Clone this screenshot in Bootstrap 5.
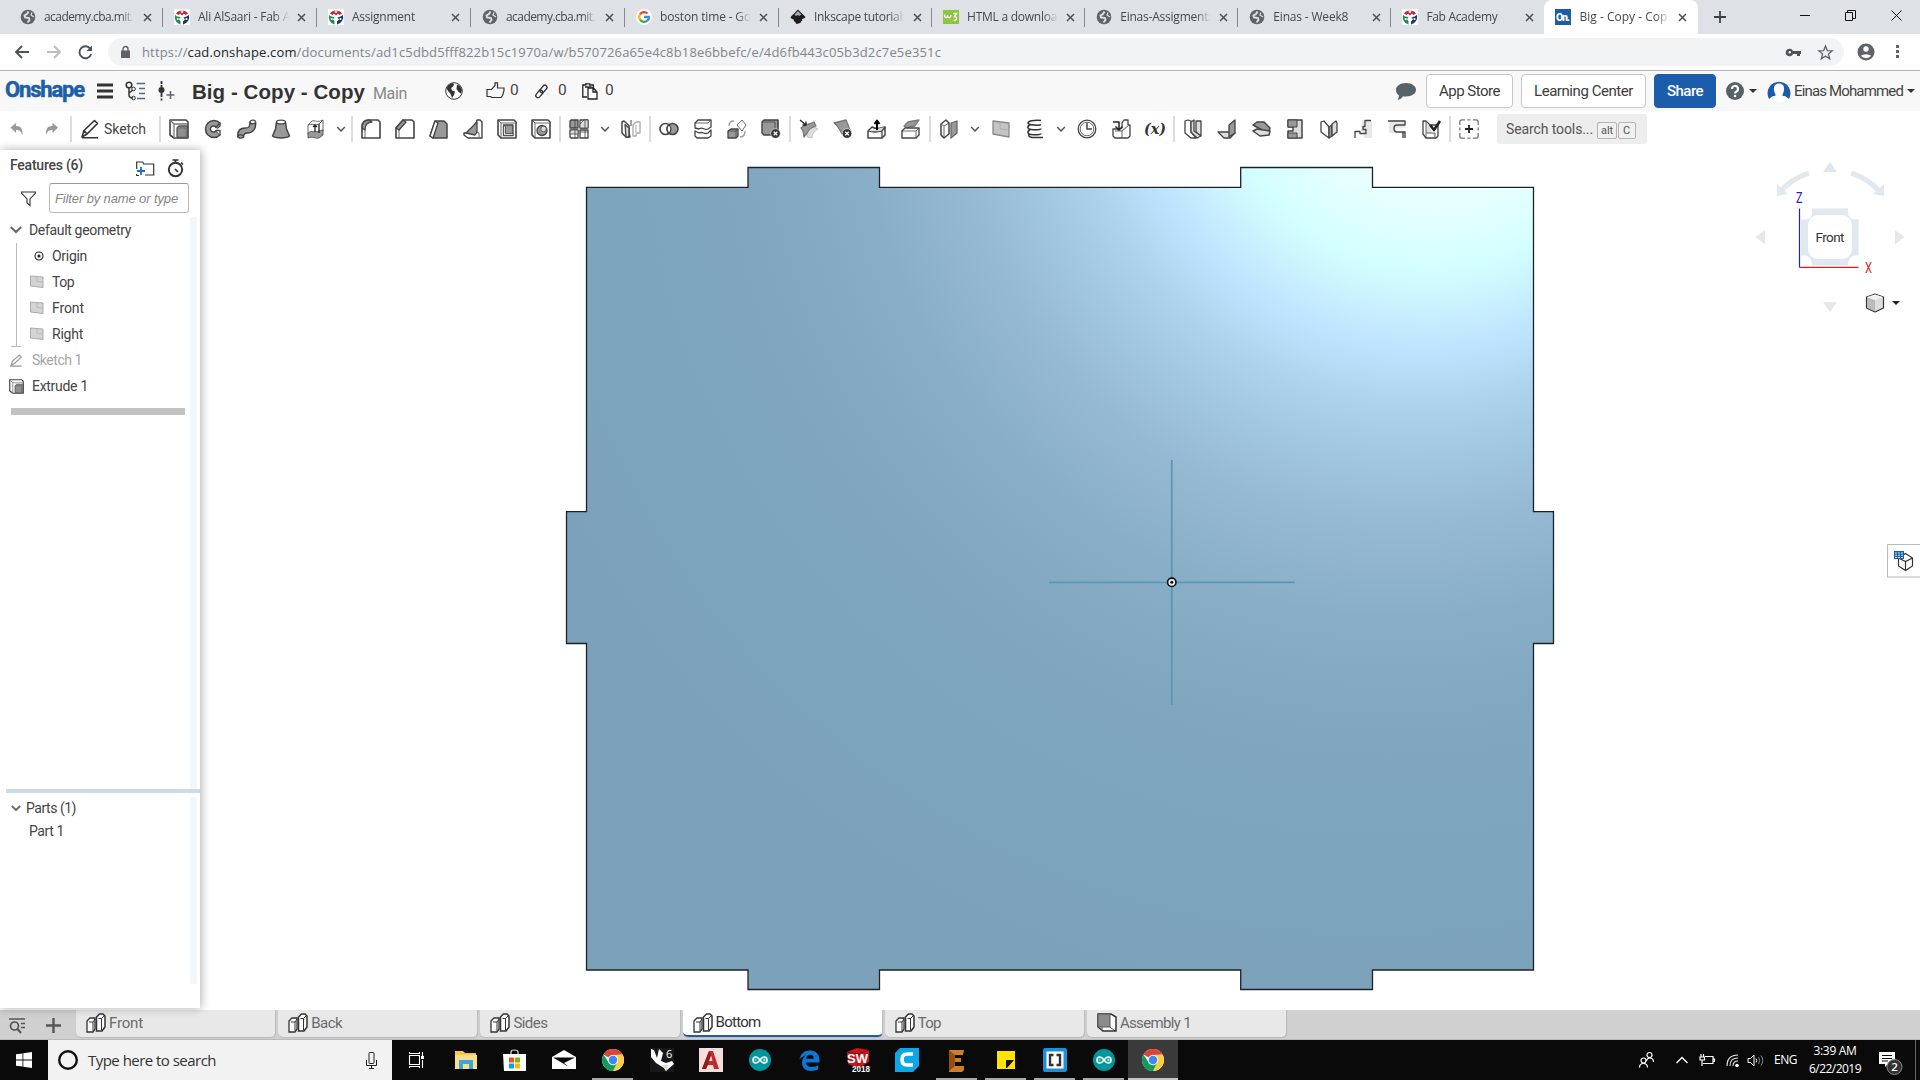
<!DOCTYPE html>
<html lang="en">
<head>
<meta charset="utf-8">
<title>Big - Copy - Copy</title>
<link href="https://cdn.jsdelivr.net/npm/bootstrap@5.3.0/dist/css/bootstrap.min.css" rel="stylesheet">
<style>
body{width:1920px;height:1080px;overflow:hidden;background:#fff;color:#444;font-family:Roboto,"Liberation Sans",sans-serif;font-size:14px;line-height:1}
svg{display:block;flex:none;overflow:visible}
[data-w]{display:inline-block;white-space:nowrap;flex:none}
.seg{font-family:"Open Sans","Noto Sans",sans-serif}
.tabstrip{height:34px;background:#dee1e6;padding-left:9px}
.btab{width:153.1px;flex:none;padding-left:11px;position:relative;font-size:12px;color:#45494d}
.btab:nth-child(-n+5){width:154px}
.btab::after{content:"";position:absolute;right:0;top:8px;width:1px;height:19px;background:#85888c}
.btab.noline::after{display:none}
.btab .ttl{width:92px;margin-left:8px;overflow:hidden;line-height:18px;white-space:nowrap;-webkit-mask-image:linear-gradient(90deg,#000 76px,transparent 91px)}
.btab .cls{margin-left:7px}
.btab.on{background:#fff;border-radius:8px 8px 0 0}
.winbtns{margin-left:auto;padding-right:18px;gap:35px}
.omni{height:36px;padding:4px 0 0 0}
.urlbox{width:1736px;height:28px;border-radius:14px;background:#f1f3f4;margin-left:14px;color:#80868b;font-size:13px}
.appbar{height:41px;background:#f8f8f8;border-top:1px solid #b4b2b6}
.brandtxt{font:bold 22px Roboto,sans-serif;color:#1b5faa;-webkit-text-stroke:.5px #1b5faa}
.title{font:bold 20.5px "Liberation Sans",sans-serif;color:#333}
.cnt{font-size:15.5px;color:#444}
.hbtn{height:34px;border:1px solid #c8c8c8;border-radius:4px;background:#fff;color:#3c3c3c;font-size:15px;padding:0}
.hbtn.share{background:#1b5dab;border-color:#1b5dab;color:#fff;font-weight:500}
.caret{width:0;height:0;border:4px solid transparent;border-top:4px solid #333;border-bottom:0}
.tools{height:39px;padding-bottom:3px}
.tools svg{width:20px;height:20px;margin:0 7px}
.tools svg.chev{width:10px;margin:0 4px}
.vsep{width:2px;height:26px;background:#ddd;margin:0 1px;flex:none}
.ic{fill:none;stroke:#444;stroke-width:1.3;stroke-linejoin:round}
.g{fill:#999}.w{fill:#fff}.lt{fill:#ddd}.k{fill:#333;stroke:none}.th{stroke-width:.8}
.search{width:150px;height:30px;background:#ededed;border-radius:3px;margin-left:11px;padding-left:9px;font-size:14px;color:#555}
.keycap{border:1px solid #b5b5b5;border-radius:2px;height:17px;font-size:11px;line-height:15px;padding:0 3px;margin-top:3px;background:#f0f0f0}
.side{width:200px;height:858px;background:#fff;box-shadow:1px 0 9px rgba(0,0,0,.33);z-index:2;flex:none}
.feath{height:33px;padding:0 16px 0 10px}
.finput{width:140px;height:30px;border:1px solid #bbb;border-top:1px solid #999;border-radius:3px;font:italic 13px "Liberation Sans",sans-serif;color:#858585;padding-left:5px}
.tree{height:572px;border-right:7px solid #f2f7fb;width:197px}
.trow{height:26px;font-size:14px}
.kids{margin-left:16px;border-left:1px solid #bbb;position:relative;height:104px;padding-left:13px}
.kids::after{content:"";position:absolute;left:-6px;bottom:0;width:10px;height:1px;background:#bbb}
.rollbar{width:174px;height:7px;background:#c2c2c2;margin:9px 0 0 11px}
.split{height:4px;margin-left:6px;background:#cfdbe4}
.plist{height:187px;width:197px;margin-top:4px;border-right:7px solid #f2f7fb}
.dtabs{height:30px;background:#d0d0d0;border-bottom:1px solid #bbb;gap:2px}
.dtab{width:200.2px;height:27px;background:#e8e8e8;border-radius:0 0 5px 5px;border-right:1px solid #bcbcbc;padding-left:10px;font-size:15px;color:#6b6b6b;box-shadow:0 1px 1px #bbb;padding-bottom:1px}
.dtab.on{background:#fff;border-bottom:2.5px solid #1b5dab;color:#333;padding-bottom:0}
.task{height:40px;background:#0a0a0a;color:#fff}
.tsearch{width:344px;height:40px;background:#f2f2f2;color:#333;padding-left:10px;font-size:15px}
.slot{width:49.1px;height:40px;flex:none}
.slot.run{box-shadow:inset 0 -2px #a9a9a9;width:41.1px;margin:0 4px}
.slot.on{background:#3a3a3a;box-shadow:inset 0 -2px #c5c5c5}
.clock{width:60px;font-size:12px;line-height:18px}
</style>
<script src="https://cdn.jsdelivr.net/npm/bootstrap@5.3.0/dist/js/bootstrap.bundle.min.js"></script>
</head>
<body class="d-flex flex-column">
<svg width="0" height="0" class="position-absolute">
<defs>
<symbol id="globe" viewBox="0 0 16 16"><circle cx="8" cy="8" r="7.300" fill="#5f6368"/><path d="M8.500 2.500L7 5 4.500 6.500 5 8.500l4 .5.500 2-2 2.500" fill="none" stroke="#dee1e6" stroke-width="1.900"/><path d="M12 3.500l-1 2.500 3 2" fill="none" stroke="#dee1e6" stroke-width="1.200"/></symbol>
<symbol id="fab" viewBox="0 0 16 16"><path fill="#fff" d="M0 0h16v16H0z"/><path d="M2 4.500A7.500 7.500 0 0 1 14 4.500L11.500 6 10 4.500 8 6.500 6 4.500 4.500 6z" fill="#cf2027"/><path d="M1.200 6A7.500 7.500 0 0 0 6.500 15.500V12L5 10.500 6.500 8 3 7.500z" fill="#1e8a55"/><path d="M14.800 6A7.500 7.500 0 0 1 9 15.500V12.500L11 10.500 9.500 8.500 12.500 7.500z" fill="#173a66"/><circle cx="8" cy="2.800" r="1.300" fill="#fff"/><circle cx="3.700" cy="10" r="1.100" fill="#fff"/><circle cx="12.500" cy="10" r="1.100" fill="#fff"/></symbol>
<symbol id="x" viewBox="0 0 9 9"><path d="M1 1l7 7M8 1l-7 7" stroke="#4c5054" stroke-width="1.500"/></symbol>
<symbol id="chev" viewBox="0 0 10 20"><path d="M1.200 8l3.800 4 3.800-4" fill="none" stroke="#555" stroke-width="1.500"/></symbol>
<symbol id="studio" viewBox="0 0 20 20"><path d="M1 8l3-3h5v11l-2 3H1z" fill="#fff" stroke="#333" stroke-width="1.300"/><path d="M3 9h4v9M7 9l2-3" fill="none" stroke="#333" stroke-width="1"/><path d="M10.500 4l3-3H17l2 2v11l-3 4h-5.500z" fill="#fff" stroke="#333" stroke-width="1.500"/><path d="M12.500 5.500h3V17M15.500 5.500l3-3" fill="none" stroke="#333" stroke-width="1"/></symbol>
<symbol id="plane" viewBox="0 0 14 14"><path d="M.5 1l12.500 1v10.500L.5 11z" fill="#d4d4d4" stroke="#aaa"/><path d="M7 2v4.500l6 .5" fill="none" stroke="#bbb"/></symbol>
<symbol id="extr" viewBox="0 0 20 20"><path d="M1 1h16l2 2v16H5L1 16z" fill="#fff" stroke="#444" stroke-width="1.600"/><path d="M5 19V5L1 1M5 5h13" fill="none" stroke="#777"/><path d="M8 9l2-2h8.500v11.500H8z" fill="#8f8f8f" stroke="#555"/><path d="M8 9h9v9" fill="none" stroke="#666" stroke-width=".8"/></symbol>
<symbol id="chrome" viewBox="0 0 24 24"><circle cx="12" cy="12" r="11" fill="#fff"/><path d="M12 12L2.470 6.500A11 11 0 0 1 21.530 6.500L12 7z" fill="#db4437"/><path d="M12 7h9.800A11 11 0 0 1 12 23l4.300-8.500z" fill="#ffcd40"/><path d="M2.470 6.500A11 11 0 0 0 12 23l4.300-8.500-8.600 0z" fill="#0f9d58"/><circle cx="12" cy="12" r="5.200" fill="#f1f1f1"/><circle cx="12" cy="12" r="4.200" fill="#4285f4"/></symbol>
<symbol id="ardu" viewBox="0 0 24 24"><circle cx="12" cy="12" r="11" fill="#00979c"/><path d="M12 12c-1.500-2-2.500-3-4-3a3 3 0 0 0 0 6c1.500 0 2.500-1 4-3s2.500-3 4-3a3 3 0 0 1 0 6c-1.500 0-2.500-1-4-3z" fill="none" stroke="#fff" stroke-width="1.600"/><path d="M6.500 12h2.500M15 12h2.500M16.250 10.800v2.400" stroke="#fff" stroke-width=".8"/></symbol>
</defs>
</svg>

<!-- browser tabs -->
<div class="tabstrip d-flex seg">
<div class="btab d-flex align-items-center"><svg width="16" height="16"><use href="#globe"/></svg><div class="ttl"><span data-w="89">academy.cba.mit.</span></div><svg class="cls" width="9" height="9"><use href="#x"/></svg></div>
<div class="btab d-flex align-items-center"><svg width="16" height="16"><use href="#fab"/></svg><div class="ttl"><span data-w="92">Ali AlSaari - Fab A</span></div><svg class="cls" width="9" height="9"><use href="#x"/></svg></div>
<div class="btab d-flex align-items-center"><svg width="16" height="16"><use href="#fab"/></svg><div class="ttl"><span data-w="63">Assignment</span></div><svg class="cls" width="9" height="9"><use href="#x"/></svg></div>
<div class="btab d-flex align-items-center"><svg width="16" height="16"><use href="#globe"/></svg><div class="ttl"><span data-w="89">academy.cba.mit.</span></div><svg class="cls" width="9" height="9"><use href="#x"/></svg></div>
<div class="btab d-flex align-items-center"><svg width="16" height="16" viewBox="0 0 16 16"><circle cx="8" cy="8" r="8" fill="#fff"/><g fill="none" stroke-width="2.300"><path d="M4 5.300A5 5 0 0 1 11.500 4.500" stroke="#ea4335"/><path d="M4 5.300a5 5 0 0 0 0 5.400" stroke="#fbbc05"/><path d="M4 10.700a5 5 0 0 0 7.300 1" stroke="#34a853"/><path d="M11.300 11.700A4.500 4.500 0 0 0 13 8H8" stroke="#4285f4"/></g></svg><div class="ttl"><span data-w="91">boston time - Go</span></div><svg class="cls" width="9" height="9"><use href="#x"/></svg></div>
<div class="btab d-flex align-items-center"><svg width="16" height="16" viewBox="0 0 16 16"><path d="M8 .5l7 7c1 1.500-1 2-2.500 2.300s1 1.400-1 2.200c-1 .4 0 1.500-1.500 2s-3 1.500-4 .5 0-1.500-1.500-2 0-1.500-1-2S-.2 9.500 1 7.500z" fill="#1c1c1c"/><path d="M8 2l3.500 3.500-2 1.500-1.500-1-2 1-1.500-1.500z" fill="#aaa"/></svg><div class="ttl"><span data-w="91">Inkscape tutorial:</span></div><svg class="cls" width="9" height="9"><use href="#x"/></svg></div>
<div class="btab d-flex align-items-center"><svg width="16" height="16" viewBox="0 0 16 16"><path d="M0 1h16v14H0z" fill="#8bc63f"/><path d="M1.500 5.500c0 4 3 4 3 .5 0 3.500 3 3.500 3.500 0M10 4.500h3.500L11.500 7.500c3 0 3 4-1 4" fill="none" stroke="#fff" stroke-width="1.400"/></svg><div class="ttl"><span data-w="90">HTML a downloa</span></div><svg class="cls" width="9" height="9"><use href="#x"/></svg></div>
<div class="btab d-flex align-items-center"><svg width="16" height="16"><use href="#globe"/></svg><div class="ttl"><span data-w="91">Einas-Assigment:</span></div><svg class="cls" width="9" height="9"><use href="#x"/></svg></div>
<div class="btab d-flex align-items-center"><svg width="16" height="16"><use href="#globe"/></svg><div class="ttl"><span data-w="75">Einas - Week8</span></div><svg class="cls" width="9" height="9"><use href="#x"/></svg></div>
<div class="btab noline d-flex align-items-center"><svg width="16" height="16"><use href="#fab"/></svg><div class="ttl"><span data-w="71">Fab Academy</span></div><svg class="cls" width="9" height="9"><use href="#x"/></svg></div>
<div class="btab on noline d-flex align-items-center"><svg width="16" height="16" viewBox="0 0 16 16"><path d="M0 0h16v16H0z" fill="#1b5dab"/><text x="1" y="12" font-family="Roboto" font-weight="900" font-size="10.500" fill="#fff" textLength="14">On.</text></svg><div class="ttl"><span data-w="88">Big - Copy - Cop</span></div><svg class="cls" width="9" height="9"><use href="#x"/></svg></div>
<svg class="mt-2 ms-3" width="12" height="17" viewBox="0 0 12 17"><path d="M6 3v12M0 9h12" stroke="#3c4043" stroke-width="1.800"/></svg>
<div class="winbtns d-flex align-items-center pb-1"><svg width="10" height="11"><path d="M0 5.500h10" stroke="#111"/></svg><svg width="11" height="11" viewBox="0 0 11 11"><path d="M.5 2.500h7v8h-7zM2.500 2.500v-2h8v8h-3" fill="none" stroke="#111"/></svg><svg width="11" height="11" viewBox="0 0 11 11"><path d="M.5.5l10 10M10.500.5l-10 10" stroke="#111"/></svg></div>
</div>

<!-- address bar -->
<div class="omni d-flex align-items-start bg-white">
<div class="d-flex align-items-center h-100 pb-1">
<svg style="margin-left:15px" width="14" height="14" viewBox="0 0 14 14"><path d="M14 7H1.500M7 1L1 7l6 6" fill="none" stroke="#4f5357" stroke-width="1.900"/></svg>
<svg style="margin-left:18px" width="14" height="14" viewBox="0 0 14 14"><path d="M0 7h12.500M7 1l6 6-6 6" fill="none" stroke="#bbbdbf" stroke-width="1.900"/></svg>
<svg style="margin-left:17px" width="15" height="15" viewBox="0 0 15 15"><path d="M12.500 4A6 6 0 1 0 13.200 9" fill="none" stroke="#4f5357" stroke-width="1.900"/><path d="M14 .5V6H8.500z" fill="#4f5357"/></svg>
</div>
<div class="urlbox seg d-flex align-items-center" style="margin-left:15px">
<svg style="margin-left:13px" width="9" height="12" viewBox="0 0 9 12"><path d="M0 4.500h9V12H0z" fill="#5f6368"/><path d="M2 5V3a2.500 2.500 0 0 1 5 0v2" fill="none" stroke="#5f6368" stroke-width="1.400"/></svg>
<span style="margin-left:12px" data-w="799">https://<span class="text-dark">cad.onshape.com</span>/documents/ad1c5dbd5fff822b15c1970a/w/b570726a65e4c8b18e6bbefc/e/4d6fb443c05b3d2c7e5e351c</span>
<svg class="ms-auto" width="15" height="9" viewBox="0 0 15 9"><path d="M6 3h9v3h-1v2h-3V6H7a3.800 3.800 0 1 1 0-3z" fill="#4f5357"/><circle cx="3.800" cy="4.200" r="1.200" fill="#fff"/></svg>
<svg style="margin:0 11px 0 17px" width="15" height="15" viewBox="0 0 15 15"><path d="M7.500 1l1.800 4.600 4.900.3-3.800 3.100 1.300 4.800-4.200-2.700-4.200 2.700L4.600 9 .8 5.900l4.900-.3z" fill="none" stroke="#5f6368" stroke-width="1.300"/></svg>
</div>
<svg style="margin:5px 0 0 13px" width="18" height="18" viewBox="0 0 18 18"><circle cx="9" cy="9" r="8.500" fill="#5f6368"/><circle cx="9" cy="6" r="2.700" fill="#fff"/><path d="M3.800 12.800a6.500 4 0 0 1 10.400 0 6.500 6 0 0 1-10.400 0z" fill="#fff"/></svg>
<svg style="margin:7px 0 0 21px" width="4" height="14"><path d="M0 0h3v3H0zM0 5h3v3H0zM0 10h3v3H0z" fill="#5f6368"/></svg>
</div>

<!-- document header -->
<div class="appbar d-flex align-items-center">
<span class="brandtxt" style="margin:-3px 0 0 5px" data-w="79">Onshape</span>
<svg style="margin-left:13px" width="16" height="16" viewBox="0 0 16 16"><path d="M0 2h16M0 8h16M0 14h16" stroke="#333" stroke-width="2.800"/></svg>
<svg style="margin-left:12px" width="20" height="20" viewBox="0 0 20 20"><circle cx="4" cy="4" r="2.800" fill="none" stroke="#333" stroke-width="1.500"/><path d="M4 7v7c0 2 1 3 4 3M4 12l4-3" fill="none" stroke="#333" stroke-width="1.500"/><circle cx="8.500" cy="8" r="1.800" fill="none" stroke="#333"/><circle cx="8.500" cy="17" r="1.800" fill="none" stroke="#333"/><path d="M11.500 2.500h8.500M14 7.500h6M14 12.500h6M12 17.500h8" stroke="#5a6a76" stroke-width="1.500"/></svg>
<svg style="margin-left:13px" width="17" height="20" viewBox="0 0 17 20"><circle cx="3.500" cy="9" r="3" fill="#333"/><path d="M3.500 0v3M3.500 4v2M3.500 12v4M3.500 17.500v2" stroke="#333" stroke-width="1.800"/><path d="M12.500 10v8M8.500 14h8" stroke="#5a6a76" stroke-width="1.600"/></svg>
<span class="title" style="margin-left:17px;padding-top:2px" data-w="173">Big - Copy - Copy</span>
<span style="margin:6px 0 0 8px;font-size:16px;color:#888" data-w="34">Main</span>
<svg style="margin-left:38px" width="18" height="18" viewBox="0 0 18 18"><circle cx="9" cy="9" r="8.300" fill="#fff" stroke="#333"/><path d="M4 2.500l4-1.500 1 2-1.500 2L6 6l1 2.500 3 1-1 3.500-2 3L5.500 12 3 9 1.500 6zM12 2.500l3 1.500 2 4-1 3.500-2.500-1.500-2-3z" fill="#333"/></svg>
<svg style="margin:-2px 0 0 23px" width="19" height="17" viewBox="0 0 19 17"><path d="M1 7.500h4.500L9 3.500V.8h2.500V6H18v2.500l-.7 2.500-.8 2.500-1.500 2H6L4.500 14.500H1z" fill="none" stroke="#333" stroke-width="1.200"/></svg>
<span class="cnt" style="margin-left:5px" data-w="9">0</span>
<svg style="margin-left:16px" width="13" height="13" viewBox="0 0 13 13"><g fill="none" stroke="#333" stroke-width="1.300" transform="rotate(-50 6.500 6.500)"><rect x="-1" y="4.200" width="8.500" height="4.400" rx="2.200"/><rect x="5.500" y="4.200" width="8.500" height="4.400" rx="2.200"/></g></svg>
<span class="cnt" style="margin-left:10px" data-w="9">0</span>
<svg style="margin-left:15px" width="16" height="17" viewBox="0 0 16 17"><path d="M5 14H.8V2h3V.8h4V2h3.500v3M3 4h6.500" fill="none" stroke="#222" stroke-width="1.300"/><path d="M6 5h5.500L15 9v7H6zM11 5v4h4" fill="#fff" stroke="#222" stroke-width="1.300"/></svg>
<span class="cnt" style="margin-left:7px" data-w="9">0</span>
<svg class="ms-auto" width="20" height="17" viewBox="0 0 20 17"><path d="M10 0c5.500 0 10 2.800 10 6.800s-4.500 6.700-10 6.700c-1.500 0-2 0-3-.3C5.500 15.500 4 16.500 1.500 17c1-1.500 1.500-3 1.300-4.800C1 11 0 9.500 0 6.800 0 2.800 4.500 0 10 0z" fill="#566169"/></svg>
<button class="btn hbtn" style="width:87px;margin-left:10px"><span data-w="61">App Store</span></button>
<button class="btn hbtn" style="width:125px;margin-left:8px"><span data-w="99">Learning Center</span></button>
<button class="btn hbtn share" style="width:62px;margin-left:8px"><span data-w="36">Share</span></button>
<svg style="margin-left:10px" width="18" height="18" viewBox="0 0 18 18"><circle cx="9" cy="9" r="9" fill="#566169"/><path d="M6 7a3 3 0 1 1 4.200 2.700Q9 10.300 9 11.500" fill="none" stroke="#fff" stroke-width="2.200"/><circle cx="9" cy="14" r="1.300" fill="#fff"/></svg>
<i class="caret" style="margin-left:5px"></i>
<svg style="margin-left:10px" width="24" height="24" viewBox="0 0 24 24"><path d="M2 20A11.500 11.500 0 1 1 22 20l-4-3H6z" fill="#1b5dab"/><path d="M12 4.500c4 0 5.500 3 5 6.500-.3 2.500-1 3.500-1.500 4.500 0 3 3 3 5.500 4.500C18 24.500 6 24.500 3 20c2.500-1.500 5.500-1.500 5.500-4.500C8 14.500 7.300 13.500 7 11c-.5-3.500 1-6.500 5-6.500z" fill="#fff"/></svg>
<span style="margin-left:3px;font-size:15px" data-w="109">Einas Mohammed</span>
<i class="caret" style="margin:0 5px 0 4px"></i>
</div>

<!-- feature toolbar -->
<div class="tools ic d-flex align-items-center">
<svg viewBox="0 0 20 20"><path d="M3.500 8.500L9 4v3c5 0 7 3 6.500 9C14 12 12.500 11 9 11v3z" fill="#999" stroke="none"/></svg>
<svg viewBox="0 0 20 20"><path d="M17 8.500L11.500 4v3c-5 0-7 3-6.500 9 1.500-4 3-5 6.500-5v3z" fill="#999" stroke="none"/></svg>
<i class="vsep" style="margin-left:2px"></i>
<svg viewBox="0 0 20 20"><path d="M2 18l2-6.500L14.500 1.500l3 3L7 15zM4 11.500L7 15M2 18.700h16" stroke-width="1.600" stroke="#333"/></svg>
<span style="margin:0 12px 0 -3px" data-w="42">Sketch</span>
<i class="vsep"></i>
<svg><use href="#extr"/></svg>
<svg viewBox="0 0 20 20"><path class="g" d="M17 4A8.500 8.500 0 1 0 17 16l-4-4.500a3 3 0 1 1 0-3z" stroke-width="1.500"/><path class="w" d="M13 8.500L17 4v3l-3 2.500M13 11.500h4V16"/></svg>
<svg viewBox="0 0 20 20"><path class="g" d="M1 18c-1-7 3-9 7-9s5-1 5-6h5.500c1 7-3 11-8 11-3 0-4 1-4 4z" stroke-width="1.500"/><ellipse class="w" cx="15.800" cy="3" rx="2.800" ry="1.800"/><ellipse class="g" cx="3.700" cy="17.500" rx="2.800" ry="1.600"/></svg>
<svg viewBox="0 0 20 20"><path class="g" d="M5.500 3L4.500 10 1.500 17c3 2.500 14 2.500 17 0l-3-7-1-7" stroke-width="1.500"/><ellipse class="w" cx="10" cy="3" rx="4.500" ry="1.900"/></svg>
<svg viewBox="0 0 20 20"><path class="w th" d="M3 6l4-4c3-1 5 2 11-1v11l-3 3c-4 2-7-2-12 1z"/><path class="g th" d="M3 14c4-3 7 0 11-2l4-1v5l-4 3c-4 1-6-2-11 0z"/><path d="M10 6v7M8 8l2-2 2 2M14 5v9" stroke="#222"/><path class="th" d="M3 6c4-2 7 1 11-1l4-4"/></svg>
<svg class="chev"><use href="#chev"/></svg>
<i class="vsep"></i>
<svg viewBox="0 0 20 20"><path class="w" d="M1 19V8q0-7 7-7h9l2 2v16z" stroke-width="1.600"/><path class="g" d="M1 9q0-8 7-8l3 2q-7 0-7 8z"/><path class="th" d="M4 19V11"/></svg>
<svg viewBox="0 0 20 20"><path class="w" d="M1 19V9l7-8h9l2 2v16z" stroke-width="1.600"/><path class="g" d="M1 9l7-8 3 2-7 8z"/><path class="th" d="M4 19v-8"/></svg>
<svg viewBox="0 0 20 20"><path class="g" d="M1 17L6 2h9l3 3v14H4z" stroke-width="1.500"/><path class="w" d="M1 17L6 2l3 2L4 19z"/></svg>
<svg viewBox="0 0 20 20"><path class="w" d="M14 1h3l2 2v16H5l-4-3v-2l9-1z" stroke-width="1.400"/><path class="g" d="M3 14L14 3v10l-2 3z"/><path class="th" d="M14 13l2 1v4"/></svg>
<svg viewBox="0 0 20 20"><path class="w" d="M1 1h16l2 2v16H4l-3-3z" stroke-width="1.600"/><path class="th" d="M4 19V4L1 1M4 4h14"/><path class="g" d="M6.500 6h9.500v10.500H6.500z"/><path class="lt th" d="M6.500 6l2 2v6.500h7.500v2H6.500z"/></svg>
<svg viewBox="0 0 20 20"><path class="w" d="M1 1h16l2 2v16H4l-3-3z" stroke-width="1.600"/><path class="th" d="M4 19V4L1 1M4 4h14"/><circle class="g" cx="11" cy="11.500" r="5"/><circle class="lt th" cx="12.500" cy="10" r="2.800"/></svg>
<i class="vsep"></i>
<svg viewBox="0 0 20 20"><path class="g" d="M2 1h7v8H1V2z"/><path class="w" d="M11 1h8v8h-8zM1 11h8v8H2l-1-1zM11 11h8v8h-8z"/><path class="lt th" d="M11 5l4-4h4v8h-8zM1 13l1-2h7v4H1zM11 13h8"/><path class="th" d="M6 1v8M16 1v8M6 11v8M16 11v8"/></svg>
<svg class="chev"><use href="#chev"/></svg>
<svg viewBox="0 0 20 20"><path class="w" d="M1 3l2-1 5 4.500V14l1 4H5l-4-4z" stroke-width="1.500"/><path class="lt" d="M4 5.500l4 3.500v9H5z"/><path d="M19 3h-4l-3 3v11h3l1-3h3z" stroke="#aaa" class="w"/><path d="M15 6v8" stroke="#bbb"/><path d="M10 1v6" stroke-width="1"/></svg>
<i class="vsep"></i>
<svg viewBox="0 0 20 20"><circle class="w" cx="6.500" cy="10" r="5.500" stroke-width="1.600"/><circle class="g" cx="13.500" cy="10" r="5.500" stroke-width="1.600"/><path class="w" d="M10 5.800a5.500 5.500 0 0 1 0 8.400 5.500 5.500 0 0 1 0-8.400z"/></svg>
<svg viewBox="0 0 20 20"><path class="w" d="M2 4l3-3h13v7l-3 2c-4 2-5-3-9 0L2 9zM2 12l4 2c4-2 5 2 9 0l3-3v6l-3 2H4l-2-2z" stroke-width="1.300"/><path class="th" d="M2 4h13l3-3"/></svg>
<svg viewBox="0 0 20 20"><path class="g" d="M1 12l3-2h7v7l-2 2H1z"/><path class="th" d="M1 12h8v7M9 12l2-2"/><path class="w th" d="M10 6l5-5 4 5-4 6z"/><path d="M2 7q0-5 5-5M18 12q0 6-5 6" stroke="#999"/></svg>
<svg viewBox="0 0 20 20"><path class="g" d="M1 3l2-2h14v12l-3 3H3l-2-2z" stroke-width="1.400"/><path class="th" d="M1 3h13v12l3-2V1"/><circle cx="14.500" cy="14.500" r="4.800" fill="#333" stroke="#fff" stroke-width=".6"/><path d="M12.700 12.700l3.600 3.600M16.300 12.700l-3.600 3.600" stroke="#fff" stroke-width="1.300"/></svg>
<i class="vsep"></i>
<svg viewBox="0 0 20 20"><path class="lt th" d="M8 18q0-8 7-10l4 2q-6 3-6 9z" stroke="#bbb"/><path class="g" d="M2 9q3-3 8-4l5-2 2 4q-7 2-9 7l-3 4-1-6z" stroke="#777"/><path d="M1 1l6 5M7 2.500V6H3.500" stroke="#222"/></svg>
<svg viewBox="0 0 20 20"><path class="g" d="M1 4l12-3 4 10-8 4Q6 8 1 4z" stroke="#777"/><circle cx="14" cy="14.500" r="4.800" fill="#333" stroke="#fff" stroke-width=".6"/><path d="M12.200 12.700l3.600 3.600M15.800 12.700l-3.600 3.600" stroke="#fff" stroke-width="1.300"/></svg>
<svg viewBox="0 0 20 20"><path class="w" d="M1 12l4-4q5 3 13 0v8l-3 3H1z" stroke-width="1.500"/><path class="lt" d="M1 12q7 2 14 0l3-4M15 12v7"/><path d="M10 11V2M7.500 5L10 1.500 12.500 5" stroke="#000" stroke-width="2"/></svg>
<svg viewBox="0 0 20 20"><path class="g" d="M3 7l4-4q5-1 11-2l-4 6q-5 0-8 2z" stroke="#777"/><path class="w" d="M1 12l3-3h14v7l-3 3H1z" stroke-width="1.400"/><path class="th" d="M1 12h14v7M15 12l3-3"/></svg>
<i class="vsep"></i>
<svg viewBox="0 0 20 20"><path class="w" d="M2 5l5-4 3 3v11l-5 4-3-3z" stroke-width="1.500"/><path class="th" d="M5 19V7l5-3M5 7L2 5"/><path class="g" d="M12 4l6-2v12l-6 5z" stroke="#666"/></svg>
<svg class="chev"><use href="#chev"/></svg>
<svg viewBox="0 0 20 20"><path d="M2 2l16 2v14L2 15z" fill="#c4c4c4" stroke="#888"/><path class="th" d="M9 3v7l9 1" stroke="#aaa"/></svg>
<svg viewBox="0 0 20 20"><path d="M16 1.500C8 1 3 2 3 4s12 3 13 1.500M5 6C2 7 2 10 6 10.500s10 .5 10-1M5 11c-3 1-3 4 1 4.500s10 .5 10-1M4 15.500c-2 3.500 6 3 14 3" stroke="#333" stroke-width="1.500"/></svg>
<svg class="chev"><use href="#chev"/></svg>
<svg viewBox="0 0 20 20"><circle class="w" cx="10" cy="10" r="8.800"/><circle cx="10" cy="10" r="6.800" class="th"/><path d="M10 4v6h5" stroke-width="1.500"/></svg>
<svg viewBox="0 0 20 20"><path class="w" d="M2 10h9V4l2-3h4v5h2v11l-2 2H4l-2-2z" stroke-width="1.300"/><path class="lt th" d="M4 12h7l6-5M11 19v-7"/><path d="M2 3h6v7M4.500 7.500L8 11l3.500-3.500" stroke="#222" stroke-width="1.500"/></svg>
<svg viewBox="0 0 20 20"><text x="-1" y="15" font-family="DejaVu Serif" font-style="italic" font-weight="bold" font-size="15.500" fill="#333" stroke="none" textLength="22" lengthAdjust="spacingAndGlyphs">(x)</text></svg>
<i class="vsep"></i>
<svg viewBox="0 0 20 20"><path class="w" d="M2 2l3-1 3 1v11l5 6H8l-6-5z"/><path class="lt" d="M8 3l3-2v11l7 5-4 2-6-6zM13 2h5v15l-5-4z"/></svg>
<svg viewBox="0 0 20 20"><path class="lt" d="M1 13h10l7 1-5 5H7z"/><path class="g" d="M12 6l6-5v13l-6 4z"/></svg>
<svg viewBox="0 0 20 20"><path class="g" d="M2 6l4-3h7l6 6-1 3h-5z" stroke-width="1.500"/><path class="lt" d="M2 12l4-2 13 2-1 4-9 1z" stroke-width="1.500"/></svg>
<svg viewBox="0 0 20 20"><path class="lt" d="M3 1h14v18H3v-7h5V8H3z" stroke-width="1.500"/><path class="g" d="M3 1h9v7H3zM3 14h9v5H3z" stroke-width="1"/></svg>
<svg viewBox="0 0 20 20"><path class="w" d="M2 3l3-1 5 6v11L2 13z"/><path class="g" d="M10 8l3-2v11l-3 2z"/><path class="lt" d="M13 5l4-3 1 2v9l-5 4z"/></svg>
<svg viewBox="0 0 20 20"><path d="M9 1h10v18h-8v-6h-3V8z" fill="#e8e8e8" stroke="none"/><path d="M18 1.500h-6v6h-2v3h3v4H7v-2H2V19" /></svg>
<svg viewBox="0 0 20 20"><path d="M2 1h16v8H9v5H2z" fill="#e8e8e8" stroke="none"/><path d="M1 2h17v4H10q-3 0-3 3.500t3 3.500h8v6M16 13v6" stroke-width="1.400"/></svg>
<svg viewBox="0 0 20 20"><path class="w" d="M2 2h3l4 4h8v11l-2 2H5l-3-4z" stroke-width="1.300"/><path class="lt th" d="M5 2v12h9v5M5 14v5"/><path d="M9 6l4 5 6-9" stroke="#222" stroke-width="2.600"/></svg>
<i class="vsep"></i>
<svg viewBox="0 0 20 20"><path d="M6 .8H3Q.8.800.8 3v3M14 .8h3q2.200 0 2.200 2.200v3M6 19.200H3Q.8 19.200.8 17v-3M14 19.200h3q2.200 0 2.200-2.200v-3M8.500.8h3M8.500 19.200h3M.8 8.500v3M19.200 8.500v3" stroke="#777"/><path d="M10 6v8M6 10h8" stroke="#222" stroke-width="1.800"/></svg>
<div class="search d-flex align-items-center"><span data-w="87">Search tools...</span><span class="keycap" style="margin-left:4px"><span data-w="12">alt</span></span><span class="keycap" style="margin-left:1px;padding:0 4px"><span data-w="8">C</span></span></div>
</div>

<!-- workspace -->
<div class="d-flex position-relative" style="height:860px">
<div class="side">
<div class="feath d-flex align-items-center"><span style="font-weight:500;padding-bottom:3px" data-w="73">Features (6)</span>
<svg class="ms-auto mt-1" width="18" height="16" viewBox="0 0 18 16"><path d="M.7 8V1h6l1 2h10v11H9M.7 13v1.500H3" fill="none" stroke="#333" stroke-width="1.200"/><path d="M5 6v8M1 10h8" stroke="#1a6fc4" stroke-width="1.800"/></svg>
<svg style="margin:2px 0 0 13px" width="17" height="18" viewBox="0 0 17 18"><circle cx="8.500" cy="10.500" r="6.700" fill="none" stroke="#333" stroke-width="1.900"/><path d="M5.500 1h6M8.500 1v3M14 3.500l2 2M8 10l3 3" stroke="#333" stroke-width="1.700"/></svg></div>
<div class="d-flex align-items-center" style="height:30px;padding-left:21px"><svg width="15" height="15" viewBox="0 0 15 15"><path d="M.5 1h14v1L9 8v6.500L6 12V8L.5 2z" fill="none" stroke="#333" stroke-width="1.100"/></svg>
<div class="finput ms-auto d-flex align-items-center" style="margin-right:11px"><span data-w="123">Filter by name or type</span></div></div>
<div class="tree" style="margin-top:4px">
<div class="trow d-flex align-items-center"><svg style="margin-left:10px" width="12" height="8" viewBox="0 0 12 8"><path d="M.8 1l5.200 5 5.200-5" fill="none" stroke="#666" stroke-width="2"/></svg><span style="margin-left:7px" data-w="102">Default geometry</span></div>
<div class="kids">
<div class="trow d-flex align-items-center"><svg style="margin-left:4px" width="10" height="10" viewBox="0 0 10 10"><circle cx="5" cy="5" r="4" fill="none" stroke="#222" stroke-width="1.100"/><circle cx="5" cy="5" r="1.600" fill="#222"/></svg><span style="margin-left:8px" data-w="35">Origin</span></div>
<div class="trow d-flex align-items-center"><svg width="14" height="14"><use href="#plane"/></svg><span class="ms-2" data-w="22">Top</span></div>
<div class="trow d-flex align-items-center"><svg width="14" height="14"><use href="#plane"/></svg><span class="ms-2" data-w="32">Front</span></div>
<div class="trow d-flex align-items-center"><svg width="14" height="14"><use href="#plane"/></svg><span class="ms-2" data-w="31">Right</span></div>
</div>
<div class="trow d-flex align-items-center" style="color:#a5a5a5"><svg style="margin-left:10px" width="13" height="13" viewBox="0 0 20 20"><path d="M2 17l2-6L14.500 1.500l3 3L7 14.500zM0 18.700h18" fill="none" stroke="#999" stroke-width="1.800"/></svg><span style="margin-left:9px" data-w="50">Sketch 1</span></div>
<div class="trow d-flex align-items-center"><svg style="margin-left:9px" width="15" height="15"><use href="#extr"/></svg><span class="ms-2" data-w="56">Extrude 1</span></div>
<div class="rollbar"></div>
</div>
<div class="split"></div>
<div class="plist"><div class="d-flex align-items-center" style="height:22px"><svg style="margin-left:11px" width="10" height="7" viewBox="0 0 10 7"><path d="M.8 1L5 5l4.200-4" fill="none" stroke="#666" stroke-width="1.800"/></svg><span style="margin-left:5px" data-w="50">Parts (1)</span></div>
<div class="d-flex align-items-center" style="height:23px;padding-left:29px"><span data-w="35">Part 1</span></div></div>
</div>
<svg width="1720" height="860" viewBox="200 150 1720 860" font-family="Roboto">
<defs><radialGradient id="sheen" gradientUnits="userSpaceOnUse" cx="1365" cy="110" r="900" fx="1452" fy="32">
<stop offset="0" stop-color="#f0ffff"/><stop offset=".18" stop-color="#e6ffff"/><stop offset=".24" stop-color="#d4ffff"/><stop offset=".322" stop-color="#bfe4ff"/><stop offset=".38" stop-color="#aed4ed"/><stop offset=".43" stop-color="#a3c8e1"/><stop offset=".5" stop-color="#96bad4"/><stop offset=".6" stop-color="#89aec8"/><stop offset=".72" stop-color="#81a7c0"/><stop offset=".85" stop-color="#7ea5be"/><stop offset="1" stop-color="#7ca2bb"/></radialGradient></defs>
<path d="M586.500 187.300H748V167.500H879.500V187.300H1240.700V167.500H1372.500V187.300H1533.500V511.700H1553.500V643.500H1533.500V970H1372.500V989.500H1240.700V970H879.500V989.500H748V970H586.500V643.500H566.500V511.700H586.500Z" fill="url(#sheen)" stroke="#1c2226" stroke-width="1.300"/>
<path d="M1049 582.300h246M1171.800 460v245" stroke="#5e96b8" stroke-width="1.800"/>
<circle cx="1171.800" cy="582.300" r="4.200" fill="#e8eef2" stroke="#111" stroke-width="1.600"/><circle cx="1171.800" cy="582.300" r="1.500" fill="#111"/>
<g fill="#e1e8ee"><path d="M1830 162l7 10h-14zM1830 312l7-10h-14zM1755.500 237l9.500-7v14.500zM1904.500 237l-9.500-7v14.500z"/>
<path d="M1812 208.500h36v6q3 5 6 5h4.500v36H1854q-6 2-6 10h-36q0-8-6-10h-5v-36h4.500q5 0 6.500-5z"/></g>
<path d="M1809 173q-18 6-29 19M1851 173q18 6 29 19" fill="none" stroke="#e1e8ee" stroke-width="5.500"/><path d="M1777 184v12l11-2zM1884 184v12l-11-2z" fill="#e1e8ee"/>
<rect x="1808" y="215" width="44" height="44" rx="10" fill="#fff"/>
<path d="M1799.500 208.500v59" stroke="#2020d0" stroke-width="1.200"/><path d="M1799.500 267.300h59" stroke="#e02020" stroke-width="1.200"/>
<text x="1796" y="203" font-size="14" fill="#2222cc" textLength="6.500" lengthAdjust="spacingAndGlyphs">Z</text><text x="1865" y="272.500" font-size="14" fill="#dd2222" textLength="7" lengthAdjust="spacingAndGlyphs">X</text>
<text x="1815.500" y="242" font-size="13.500" fill="#333" textLength="29">Front</text>
<g stroke="#333" stroke-linejoin="round"><path d="M1866.500 297l8.500-3 8.500 3v11l-8.500 4-8.500-4z" fill="#ddd" stroke-width="1.200"/><path d="M1867 297.300l8 3v11l-8-3.500z" fill="#bbb" stroke="none"/><path d="M1867 297l8-2.500 8 2.500-8 3z" fill="#f2f2f2" stroke="none"/></g>
<path d="M1892 301h8l-4 4z" fill="#222"/>
<path d="M1922 544.500h-34.500v32.500H1922" fill="#fff" stroke="#bbb"/>
<path d="M1898.500 558l7-4.500 7 4.500v8l-7 4.500-7-4.500zM1898.500 558l7 3.500 7-3.500M1905.500 561.500v9" fill="#fff" stroke="#333" stroke-width="1.200"/>
<path d="M1894 551h10v8h-10z" fill="#1b5dab"/><path d="M1895 553h2M1898 553h2M1901 553h2M1895 555.300h2M1898 555.300h2M1901 555.300h2M1895 557.500h2M1898 557.500h2M1901 557.500h2" stroke="#cfe2f5" stroke-width="1.100"/>
</svg>
</div>

<!-- document tabs -->
<div class="dtabs d-flex align-items-start">
<div class="d-flex align-items-center" style="width:74px;height:30px;padding-left:9px"><svg width="17" height="17" viewBox="0 0 17 17"><path d="M0 2h16M12 6.500h4M12 10.500h4" stroke="#555" stroke-width="1.700"/><circle cx="5.500" cy="9" r="4" fill="none" stroke="#555" stroke-width="1.700"/><path d="M8.500 12l3.500 4" stroke="#555" stroke-width="2"/></svg><svg style="margin-left:20px" width="15" height="15" viewBox="0 0 15 15"><path d="M7.500 0v15M0 7.500h15" stroke="#555" stroke-width="2.400"/></svg></div>
<div class="dtab d-flex align-items-center"><svg width="20" height="20"><use href="#studio"/></svg><span style="margin-left:3px" data-w="34">Front</span></div>
<div class="dtab d-flex align-items-center"><svg width="20" height="20"><use href="#studio"/></svg><span style="margin-left:3px" data-w="31">Back</span></div>
<div class="dtab d-flex align-items-center"><svg width="20" height="20"><use href="#studio"/></svg><span style="margin-left:3px" data-w="34">Sides</span></div>
<div class="dtab on d-flex align-items-center"><svg width="20" height="20"><use href="#studio"/></svg><span style="margin-left:3px" data-w="45">Bottom</span></div>
<div class="dtab d-flex align-items-center"><svg width="20" height="20"><use href="#studio"/></svg><span style="margin-left:3px" data-w="23">Top</span></div>
<div class="dtab d-flex align-items-center"><svg width="20" height="20" viewBox="0 0 20 20"><path d="M1 1h13l5 3v14H6l-5-4z" fill="#fff" stroke="#333" stroke-width="1.500"/><path d="M1 1h12v13H1z" fill="#8c8c8c" stroke="#555"/><path d="M13 14l5 4M5 14v3" stroke="#555"/></svg><span style="margin-left:3px" data-w="71">Assembly 1</span></div>
</div>

<!-- taskbar -->
<div class="task seg d-flex align-items-center">
<div class="d-flex justify-content-center" style="width:48px"><svg width="16" height="16" viewBox="0 0 16 16"><path d="M0 2.300L6.500 1.400v6.200H0zM7.300 1.300L16 0v7.600H7.300zM0 8.400h6.500v6.200L0 13.700zM7.300 8.400H16V16l-8.700-1.300z" fill="#fff"/></svg></div>
<div class="tsearch d-flex align-items-center"><svg width="20" height="20"><circle cx="10" cy="10" r="8.800" fill="none" stroke="#111" stroke-width="2.400"/></svg><span style="margin-left:10px" data-w="128">Type here to search</span><svg style="margin-left:150px" width="11" height="17" viewBox="0 0 11 17"><rect x="3" y=".5" width="5" height="11" rx="1" fill="none" stroke="#222"/><path d="M.5 8v5.500h10V8M5.500 13.500v3M3 16.500h5" fill="none" stroke="#222"/></svg></div>
<div class="slot d-flex align-items-center justify-content-center"><svg width="16" height="16" viewBox="0 0 16 16"><path d="M.5 3.500h10v9H.5zM.5 0v1.500h10V0M.5 16v-1.500h10V16M13.500 0v4M13.500 8v8" fill="none" stroke="#fff" stroke-width="1.100"/><path d="M12 4h3v3h-3z" fill="#fff"/></svg></div>
<div class="slot d-flex align-items-center justify-content-center"><svg width="22" height="18" viewBox="0 0 22 18"><path d="M0 0h8l2 2h11v16H0z" fill="#f5c64f"/><path d="M0 4h22v14H0z" fill="#fbdf8b"/><path d="M4 18V9h14v9h-4v-5H8v5z" fill="#3aa6dd"/></svg></div>
<div class="slot d-flex align-items-center justify-content-center"><svg width="23" height="23" viewBox="0 0 23 23"><path d="M8 6V3q0-2 3.500-2T15 3v3" fill="none" stroke="#ddd" stroke-width="1.200"/><path d="M0 5h23v17H1z" fill="#fff"/><path d="M6 8.500h5v5H6z" fill="#f25022"/><path d="M12 8.500h5v5h-5z" fill="#7fba00"/><path d="M6 14.500h5v5H6z" fill="#00a4ef"/><path d="M12 14.500h5v5h-5z" fill="#ffb900"/></svg></div>
<div class="slot d-flex align-items-center justify-content-center"><svg width="24" height="20" viewBox="0 0 24 20"><path d="M0 7l12-7 12 7v12H0z" fill="#fff"/><path d="M1 7.500h22L12 13l5 4z" fill="#0a0a0a"/></svg></div>
<div class="slot run d-flex align-items-center justify-content-center"><svg width="24" height="24"><use href="#chrome"/></svg></div>
<div class="slot d-flex align-items-center justify-content-center"><svg width="24" height="24" viewBox="0 0 24 24"><path d="M0 0h24v24H0z" fill="#181818"/><path d="M1 1l3 1 3 8 2-9 4 4-2 8 5 2 6-2 2 3-8 7-2-3-8-5-5-6z" fill="#fff"/><path d="M12 17l4 6 3-6" fill="#ddd"/><text x="16" y="10" font-size="11" font-family="Open Sans" fill="#fff">6</text></svg></div>
<div class="slot d-flex align-items-center justify-content-center"><svg width="24" height="24" viewBox="0 0 24 24"><path d="M0 0h24v24H0z" fill="#f5dedc"/><path d="M3 21L10 3h4l6 18h-5l-1-4H9l-2 4zM10 13h3.500L12 7z" fill="#c32a2c" fill-rule="evenodd"/><path d="M3 21L10 3l2 4-5 14z" fill="#8d1c1e"/></svg></div>
<div class="slot d-flex align-items-center justify-content-center"><svg width="24" height="24"><use href="#ardu"/></svg></div>
<div class="slot d-flex align-items-center justify-content-center"><svg width="21" height="21" viewBox="0 0 21 21"><path d="M.5 9.500C1.500 3.500 5.500.5 11 .5c6.500 0 9.500 4.500 9.500 10v2H7c.3 3.500 3 4.500 6 4.500 2.500 0 4.500-.7 6.200-1.700v4C17.500 20.500 15 21 12.300 21 6.500 21 3 17.500 3 12.500 3 9.500 4.500 7 7 5.500 4 6 2 7.500.5 9.500zM7.200 8.800h7.500c0-2.500-1-4-3.500-4s-3.700 1.500-4 4z" fill="#0a78d7"/></svg></div>
<div class="slot d-flex align-items-center justify-content-center"><svg width="24" height="24" viewBox="0 0 24 24"><path d="M1 4l10-4 12 2v12l-10 6L2 16z" fill="#c9151b"/><path d="M1 4l11 2 11-4M12 6v12" stroke="#7c0a0e" fill="none"/><text x="1" y="15" font-size="12" font-weight="bold" font-family="Liberation Sans" fill="#fff" textLength="21" lengthAdjust="spacingAndGlyphs">SW</text><text x="6" y="23.500" font-size="8.500" font-weight="bold" font-family="Liberation Sans" fill="#fff" textLength="18" lengthAdjust="spacingAndGlyphs">2018</text></svg></div>
<div class="slot d-flex align-items-center justify-content-center"><svg width="24" height="24" viewBox="0 0 24 24"><path d="M5 0h19v18l-6 6H0V5z" fill="#0ea7e6"/><path d="M18 6h-6q-5 0-5 5.500t5 5.500h6" fill="none" stroke="#fff" stroke-width="3.600"/></svg></div>
<div class="slot run d-flex align-items-center justify-content-center"><svg width="17" height="24" viewBox="0 0 17 24"><path d="M1 2h15l-1 5H7v3h6v4H7v4h9v4l-2 2H1l1-5z" fill="#cf7e2c"/><path d="M1 2l6 5v11l-6 5z" fill="#95500f"/></svg></div>
<div class="slot run d-flex align-items-center justify-content-center"><svg width="18" height="18" viewBox="0 0 18 18"><path d="M0 0h18v18H0z" fill="#fee400"/><path d="M9 9h8l-7 8H9z" fill="#111"/></svg></div>
<div class="slot run d-flex align-items-center justify-content-center"><svg width="24" height="24" viewBox="0 0 24 24"><rect width="24" height="24" rx="2" fill="#1c8fd6"/><path d="M3.500 3.500h17v17h-17z" fill="#fff"/><path d="M10.500 7H7v10h3.500M13.500 7H17v10h-3.500" fill="none" stroke="#333" stroke-width="2.400"/></svg></div>
<div class="slot run d-flex align-items-center justify-content-center"><svg width="24" height="24"><use href="#ardu"/></svg></div>
<div class="slot on d-flex align-items-center justify-content-center"><svg width="24" height="24"><use href="#chrome"/></svg></div>
<div class="ms-auto d-flex align-items-center">
<svg width="15" height="16" viewBox="0 0 15 16"><g fill="none" stroke="#fff" stroke-width="1.200"><circle cx="4.500" cy="8.500" r="2.500"/><path d="M.5 15.500q0-4 4-4t4 4"/><circle cx="10.500" cy="3" r="2.500"/><path d="M7.500 9q.5-3 3-3 4 0 4 4"/></g></svg>
<svg style="margin-left:22px" width="12" height="8" viewBox="0 0 12 8"><path d="M.5 7L6 1.500 11.500 7" fill="none" stroke="#fff" stroke-width="1.400"/></svg>
<svg style="margin-left:11px" width="16" height="12" viewBox="0 0 16 12"><path d="M6 2.500h8v7H4M14 5h1.500v2.500H14M2 0v3M4.500 0v3M1 3h4.500v3H1zM3 6v6" fill="none" stroke="#fff" stroke-width="1.200"/></svg>
<svg style="margin-left:11px" width="13" height="13" viewBox="0 0 13 13"><g fill="none" stroke="#ddd" stroke-width="1.100"><path d="M1 12Q1 1 12 1M4 12q0-8 8-8M7 12q0-5 5-5"/></g><circle cx="11" cy="11.500" r="1.800" fill="#fff"/></svg>
<svg style="margin-left:8px" width="17" height="13" viewBox="0 0 17 13"><path d="M1 4.500h2.500L7 1v11L3.500 8.500H1z" fill="none" stroke="#fff"/><path d="M9 4.500q1.500 2 0 4" fill="none" stroke="#fff"/><path d="M11.500 3q2.500 3.500 0 7M14 1.500q3.500 5 0 10" fill="none" stroke="#888"/></svg>
<span style="margin-left:10px;font-size:12px" data-w="23">ENG</span>
<div class="clock text-center" style="margin-left:8px"><span data-w="43">3:39 AM</span><br><span data-w="52">6/22/2019</span></div>
<svg style="margin:3px 13px 0 14px" width="23" height="24" viewBox="0 0 23 24"><path d="M0 2h16v12H9l-3 3v-3H0z" fill="#fff"/><path d="M3 5.500h10M3 8.500h10M3 11h6" stroke="#0a0a0a"/><circle cx="15.500" cy="17" r="7.500" fill="#333" stroke="#888"/><text x="12.300" y="21.200" font-size="11.500" font-weight="600" font-family="Open Sans" fill="#fff">2</text></svg>
</div>
<i style="width:1px;height:40px;background:#666;margin-right:4px"></i>
</div>
<script>
// Set each label to its design width by spreading the difference over its letters.
document.querySelectorAll('[data-w]').forEach(function (el) {
  var n = el.textContent.length, w = el.getBoundingClientRect().width;
  el.style.letterSpacing = ((+el.dataset.w - w) / n).toFixed(3) + 'px';
});
</script>
</body>
</html>
